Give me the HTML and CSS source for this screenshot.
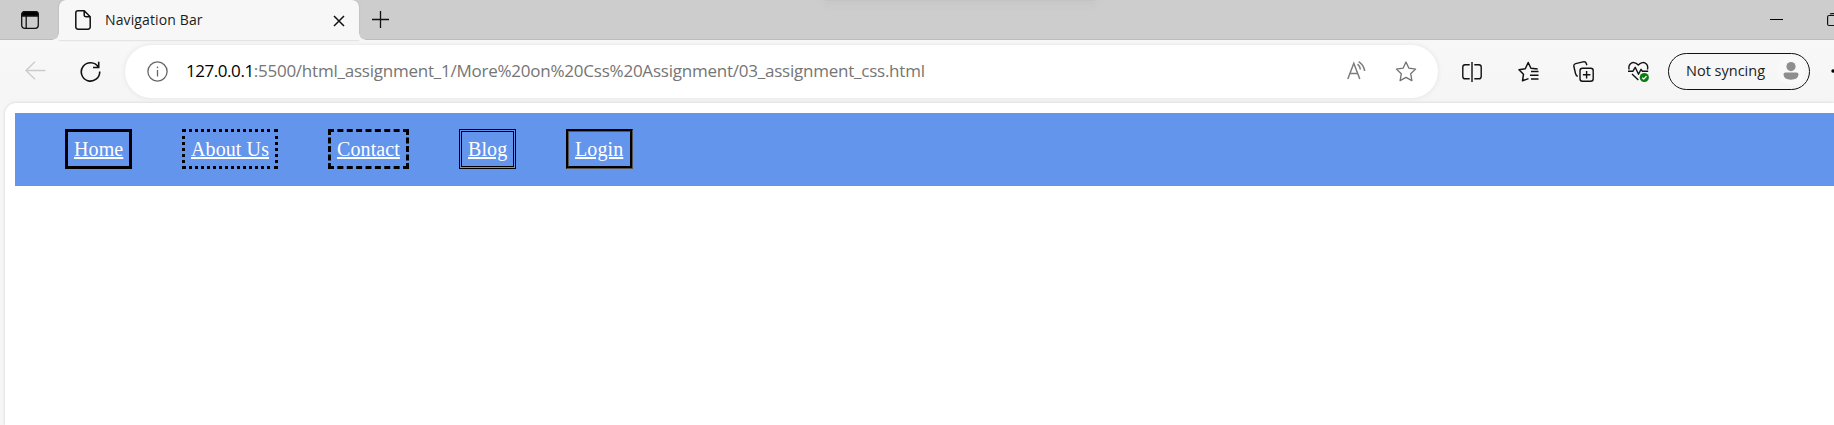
FILE: index.html
```html
<!DOCTYPE html>
<html lang="en">
<head>
<meta charset="utf-8">
<title>Navigation Bar</title>
<link rel="stylesheet" href="styles.css">
</head>
<body>
<div class="browser">
  <header class="tabstrip">
    <svg class="workspace" width="18" height="18" viewBox="0 0 18 18" fill="none" stroke="#111" stroke-width="1.3"><rect x=".7" y=".7" width="16.6" height="16.6" rx="3"/><path d="M1 3.2a2.5 2.5 0 0 1 2.5-2.5h11A2.5 2.5 0 0 1 17 3.2V5H1z" fill="#000"/><path d="M5.2 5v12"/></svg>
    <div class="tab">
      <svg class="page-icon" width="16" height="20" viewBox="0 0 16 20" fill="none" stroke="#111" stroke-width="1.5"><path d="M3 .8h6.2L15.200 6.800V17a2.200 2.200 0 0 1-2.200 2.200H3A2.200 2.200 0 0 1 .8 17V3A2.200 2.200 0 0 1 3 .8zM9.200 1v4a1.800 1.800 0 0 0 1.800 1.800h4"/></svg>
      <span class="tab-title">Navigation Bar</span>
      <svg class="tab-close" width="12" height="12" viewBox="0 0 12 12" stroke="#111" stroke-width="1.5"><path d="M1 1l10 10M11 1L1 11"/></svg>
    </div>
    <svg class="new-tab" width="18" height="18" viewBox="0 0 18 18" stroke="#111" stroke-width="1.300"><path d="M8.500 0v17M0 8.500h17"/></svg>
    <div class="window-buttons">
      <svg width="13" height="13" viewBox="0 0 13 13" stroke="#000"><path d="M0 6.500h13"/></svg>
      <svg width="14" height="14" viewBox="0 0 14 14" fill="none" stroke="#111" stroke-width="1.200"><rect x=".6" y="2.500" width="10" height="10" rx="1.500"/><path d="M3 1Q3.500.6 5 .6h6q2.400 0 2.400 2.400v7"/></svg>
    </div>
    <div class="top-shade"></div>
  </header>

  <div class="toolbar">
    <svg class="back" width="21" height="19" viewBox="0 0 21 19" fill="none" stroke="#cbcbcb" stroke-width="1.300"><path d="M10 .7L1 9.500l9 8.800M1 9.500h19.500"/></svg>
    <svg class="reload" width="21" height="21" viewBox="0 0 21 21" fill="none" stroke="#111" stroke-width="1.600"><path d="M18.300 6A9.200 9.200 0 1 0 19.700 10.500M18.700 .8v5.700H13"/></svg>
    <div class="address">
      <svg class="info" width="21" height="21" viewBox="0 0 21 21" fill="none" stroke="#666" stroke-width="1.300"><circle cx="10.500" cy="10.500" r="9.600"/><path d="M10.500 9v6.500"/><circle cx="10.500" cy="6.300" r=".5" fill="#666" stroke-width=".8"/></svg>
      <div class="url"><span class="host">127.0.0.1</span><span class="path">:5500/html_assignment_1/More%20on%20Css%20Assignment/03_assignment_css.html</span></div>
      <svg class="read" width="20" height="19" viewBox="0 0 20 19" fill="none" stroke="#7c7c7c" stroke-width="1.500"><path d="M.8 18L6.800 2.300 12.800 18M2.800 12.500h8M10.500 3.200q2.500 1.700 2.900 5.300M11.700.7q5 3.200 6 9.300"/></svg>
      <svg class="star" width="22" height="21" viewBox="0 0 22 21" fill="none" stroke="#727272" stroke-width="1.300" stroke-linejoin="round"><path d="M11 1l2.900 6.200 6.700.9-4.900 4.700 1.200 6.800-5.900-3.200-5.900 3.200 1.200-6.800L1.400 8.100l6.700-.9z"/></svg>
    </div>
    <svg class="split" width="20" height="20" viewBox="0 0 20 20" fill="none" stroke="#111" stroke-width="1.400"><path d="M7.700 2.700H3.200A2.400 2.400 0 0 0 .8 5.100v9.300a2.400 2.400 0 0 0 2.400 2.400h4.500M12.300 2.700h4.500a2.400 2.400 0 0 1 2.400 2.400v9.300a2.400 2.400 0 0 1-2.400 2.400h-4.500M10 0v20"/></svg>
    <svg class="favorites" width="21" height="21" viewBox="0 0 21 21" fill="none" stroke="#111" stroke-width="1.500" stroke-linejoin="round"><path d="M10.500 17.600L4.500 19.800 5.500 13.200 1 8.700l6.300-1L10.200 1.500l2.700 5.800 6.800.8M13 10.500h7.500M12 14.300h8.500M13 18h7.500"/></svg>
    <svg class="collections" width="21" height="21" viewBox="0 0 21 21" fill="none" stroke="#111" stroke-width="1.400"><rect x="7" y="7.200" width="13.200" height="13" rx="2.500"/><path d="M13.600 10v7.500M9.900 13.700h7.500M4.700 15.500Q3 14.500 2.500 12.500L.9 5.500Q.4 3.200 2.700 2.600L10 .9q2.800-.5 3.400 1.800l.4 1.500"/></svg>
    <svg class="health" width="21" height="21" viewBox="0 0 21 21" fill="none" stroke="#111" stroke-width="1.400" stroke-linejoin="round"><path d="M1.200 8.500Q.2 5.500 2 3.200C4.300.8 7.500 1 10.300 4 13 1 16.300.8 18.600 3.200q1.800 2.300.8 5.300M0 10.300h4.800l2.400-4 3.300 7 2.600-5 1.300 2h5.800M4 13l6.300 6"/><circle cx="16.300" cy="16.500" r="4.600" fill="#0b7d10" stroke="none"/><path d="M14.200 16.700l1.500 1.400 2.800-3" stroke="#fff" stroke-width="1.300"/></svg>
    <div class="profile">
      <span class="profile-label">Not syncing</span>
      <span class="avatar"><svg width="16" height="18" viewBox="0 0 16 18" fill="#8e8e8e"><circle cx="8" cy="4.600" r="4.600"/><path d="M2.500 10.500h11Q15.500 10.500 15.500 12.500 15 17.700 8 17.700T.5 12.500Q.5 10.500 2.500 10.500z"/></svg></span>
    </div>
    <svg class="more" width="3" height="4" viewBox="0 0 3 4"><circle cx="2" cy="2" r="1.700"/></svg>
  </div>

  <main class="viewport">
    <nav class="navbar">
      <a class="link solid" href="#">Home</a>
      <a class="link dotted" href="#">About Us</a>
      <a class="link dashed" href="#">Contact</a>
      <a class="link double" href="#">Blog</a>
      <a class="link groove" href="#">Login</a>
    </nav>
  </main>
</div>
</body>
</html>
```
FILE: styles.css
```css
* { box-sizing: border-box; }
body { margin: 0; overflow: hidden; }
svg { display: block; flex: none; }
.browser {
  width: 1834px;
  height: 425px;
  display: flex;
  flex-direction: column;
  overflow: hidden;
  background: #f6f6f6;
  font-family: "Open Sans", "Noto Sans", sans-serif;
}
.tabstrip {
  position: relative;
  height: 40px;
  flex: none;
  display: flex;
  background: #cdcdcd;
  box-shadow: inset 0 -1px 0 #bdbdbd;
}
.workspace { margin: 11px 0 0 21px; }
.tab {
  position: relative;
  width: 300px;
  height: 40px;
  margin-left: 20px;
  display: flex;
  background: #f7f7f7;
  border-radius: 7px 7px 0 0;
  box-shadow: 0 0 2px #aaa;
}
.tab::before, .tab::after {
  content: "";
  position: absolute;
  bottom: 0;
  width: 6px;
  height: 6px;
}
.tab::before { left: -6px; background: radial-gradient(circle at 0 0, #cdcdcd 5px, #f7f7f7 6px); }
.tab::after { right: -6px; background: radial-gradient(circle at 100% 0, #cdcdcd 5px, #f7f7f7 6px); }
.page-icon { margin: 10px 0 0 16px; }
.tab-title {
  width: 228px;
  margin-left: 14px;
  font-size: 14px;
  line-height: 39px;
  letter-spacing: 0.12px;
  color: #1b1b1b;
  white-space: nowrap;
}
.tab-close { margin-top: 15px; }
.new-tab { margin: 11px 0 0 13px; }
.window-buttons {
  display: flex;
  gap: 44px;
  margin: 13px -7px 0 auto;
}
.top-shade {
  position: absolute;
  left: 825px;
  top: 0;
  width: 270px;
  height: 1px;
  box-shadow: 0 0 9px 1px #bbb;
  background: #c4c4c4;
}
.toolbar {
  height: 63px;
  flex: none;
  display: flex;
  background: linear-gradient(#f8f8f8, #f5f5f5);
}
.back { margin: 21px 0 0 25px; }
.reload { margin: 21px 0 0 34px; }
.address {
  width: 1313px;
  height: 53px;
  margin: 5px 0 0 24px;
  display: flex;
  background: #fff;
  border-radius: 27px;
  box-shadow: 0 0 5px #e2e2e2;
}
.info { margin: 16px 0 0 22px; }
.url {
  width: 1161px;
  margin-left: 18px;
  font-size: 17px;
  line-height: 52px;
  white-space: nowrap;
}
.host { color: #000; letter-spacing: -0.45px; }
.path { color: #757575; letter-spacing: -0.23px; }
.read { margin: 16px 0 0 0; }
.star { margin: 16px 0 0 28px; }
.split { margin: 22px 0 0 24px; }
.favorites { margin: 21px 0 0 36px; }
.collections { margin: 21px 0 0 34px; }
.health { margin: 21px 0 0 34px; }
.profile {
  width: 142px;
  height: 37px;
  margin: 13px 0 0 19px;
  display: flex;
  border: 1.5px solid #111;
  border-radius: 19px;
}
.profile-label {
  width: 91px;
  margin-left: 17px;
  font-size: 14.500px;
  line-height: 34px;
  color: #222;
  white-space: nowrap;
}
.avatar {
  width: 28px;
  height: 28px;
  margin-top: 3px;
  display: flex;
  align-items: center;
  justify-content: center;
  border-radius: 50%;
  background: #f9f9f9;
}
.more { margin: 29px 0 0 21px; }
.viewport {
  flex: 1;
  margin-left: 5px;
  padding: 10px 0 0 10px;
  background: #fff;
  border-radius: 11px 0 0 0;
  box-shadow: 0 0 3px #ccc;
}
.navbar {
  height: 73px;
  padding: 16px 50px;
  display: flex;
  align-items: flex-start;
  gap: 50px;
  background: cornflowerblue;
}
.link {
  height: 40px;
  padding: 6px;
  border: 3px solid #000;
  font: 20px/22px "Liberation Serif", serif;
  letter-spacing: 0.1px;
  color: #fff;
  white-space: nowrap;
}
.solid { width: 67px; }
.dotted { width: 96px; border-style: dotted; }
.dashed { width: 81px; border-style: dashed; }
.double { width: 57px; border-style: double; }
.groove { width: 67px; border-style: groove; }
```
